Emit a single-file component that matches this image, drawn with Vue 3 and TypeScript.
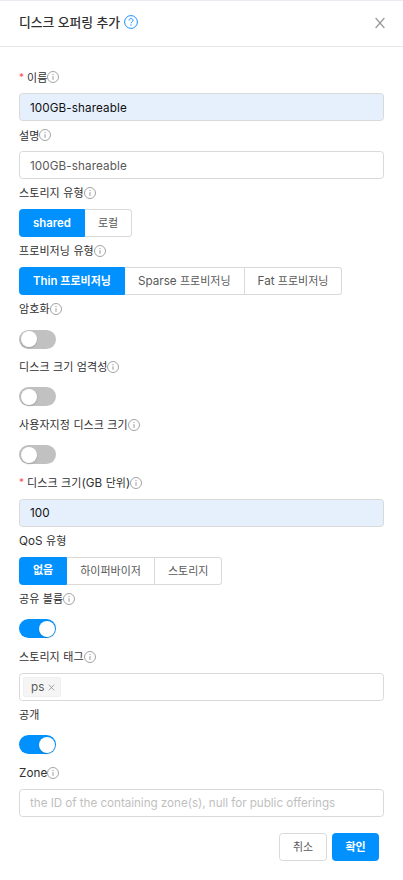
<script setup lang="ts">
import { defineComponent, h, ref } from 'vue'

type Kind = 'input' | 'radio' | 'switch' | 'tags'

interface Field {
  key: string
  label: string
  kind: Kind
  required?: boolean
  info?: boolean
  filled?: boolean
  value?: string
  placeholder?: string
  options?: string[]
  on?: boolean
}

// Hangul runs are set slightly smaller than the Latin ones beside them.
const MixedText = defineComponent({
  props: { text: { type: String, required: true } },
  setup(props) {
    return () =>
      (props.text.match(/[\uac00-\ud7a3]+|[^\uac00-\ud7a3]+/g) ?? []).map((run) =>
        h('span', { class: /[\uac00-\ud7a3]/.test(run) ? 'run-ko' : 'run-latin' }, run),
      )
  },
})

const fields = ref<Field[]>([
  { key: 'name', label: '이름', kind: 'input', required: true, info: true, filled: true, value: '100GB-shareable' },
  { key: 'description', label: '설명', kind: 'input', info: true, value: '100GB-shareable' },
  { key: 'storagetype', label: '스토리지 유형', kind: 'radio', info: true, value: 'shared', options: ['shared', '로컬'] },
  {
    key: 'provisioningtype',
    label: '프로비저닝 유형',
    kind: 'radio',
    info: true,
    value: 'Thin 프로비저닝',
    options: ['Thin 프로비저닝', 'Sparse 프로비저닝', 'Fat 프로비저닝'],
  },
  { key: 'encrypt', label: '암호화', kind: 'switch', info: true, on: false },
  { key: 'strict', label: '디스크 크기 엄격성', kind: 'switch', info: true, on: false },
  { key: 'custom', label: '사용자지정 디스크 크기', kind: 'switch', info: true, on: false },
  { key: 'size', label: '디스크 크기(GB 단위)', kind: 'input', required: true, info: true, filled: true, value: '100' },
  { key: 'qos', label: 'QoS 유형', kind: 'radio', value: '없음', options: ['없음', '하이퍼바이저', '스토리지'] },
  { key: 'shareable', label: '공유 볼륨', kind: 'switch', info: true, on: true },
  { key: 'tags', label: '스토리지 태그', kind: 'tags', info: true, value: 'ps' },
  { key: 'public', label: '공개', kind: 'switch', on: true },
  {
    key: 'zone',
    label: 'Zone',
    kind: 'input',
    info: true,
    value: '',
    placeholder: 'the ID of the containing zone(s), null for public offerings',
  },
])
</script>

<template>
  <div class="modal">
    <header class="header">
      <h1 class="title">디스크 오퍼링 추가</h1>
      <svg class="help" viewBox="0 0 14 14" fill="none" stroke="currentColor">
        <circle cx="7" cy="7" r="6.4" stroke-width="1" />
        <path d="M5 5.5C5 4.3 5.9 3.6 7 3.6s2 .7 2 1.8c0 1.4-2 1.5-2 2.9" stroke-width="1" />
        <circle cx="7" cy="10" r=".65" fill="currentColor" stroke="none" />
      </svg>
      <svg class="close" viewBox="0 0 12 12" fill="none" stroke="currentColor">
        <path d="M1.6 1 10.4 11M10.4 1 1.6 11" stroke-width="1.2" />
      </svg>
    </header>

    <form class="form" @submit.prevent>
      <div v-for="field in fields" :key="field.key" class="field">
        <div class="label">
          <span v-if="field.required" class="required">*</span>
          <span class="label-text"><MixedText :text="field.label" /></span>
          <svg v-if="field.info" class="info" viewBox="0 0 12 12" fill="none" stroke="currentColor">
            <circle cx="6" cy="6" r="5.5" stroke-width=".8" />
            <path d="M6 5.2v3.6" stroke-width=".9" />
            <circle cx="6" cy="3.6" r=".6" fill="currentColor" stroke="none" />
          </svg>
        </div>

        <div class="control">
          <input
            v-if="field.kind === 'input'"
            v-model="field.value"
            class="input"
            :class="{ filled: field.filled }"
            :placeholder="field.placeholder"
            type="text"
            spellcheck="false"
          />

          <div v-else-if="field.kind === 'radio'" class="radio-group">
            <button
              v-for="option in field.options"
              :key="option"
              type="button"
              class="radio"
              :class="{ selected: option === field.value }"
              @click="field.value = option"
            >
              <MixedText :text="option" />
            </button>
          </div>

          <button
            v-else-if="field.kind === 'switch'"
            type="button"
            class="switch"
            :class="{ on: field.on }"
            @click="field.on = !field.on"
          >
            <span class="knob"></span>
          </button>

          <div v-else class="tags">
            <span class="tag">
              {{ field.value }}
              <svg class="tag-close" viewBox="0 0 8 8" fill="none" stroke="currentColor">
                <path d="M1 .8 7 7.2M7 .8 1 7.2" stroke-width=".9" />
              </svg>
            </span>
          </div>
        </div>
      </div>

      <footer class="footer">
        <button type="button" class="button">취소</button>
        <button type="submit" class="button primary">확인</button>
      </footer>
    </form>
  </div>
</template>

<style>
body {
  background: #fff;
}

.run-ko {
  font-size: 11px;
}

.run-latin {
  white-space: pre;
}
</style>

<style scoped>
.modal {
  box-sizing: border-box;
  width: 100%;
  height: 880px;
  overflow: hidden;
  border-top: 1px solid #e9edf1;
  background: #fff;
  color: #303030;
  font: 11.7px/1.4 Inter, 'Noto Sans CJK KR', sans-serif;
}

button,
input {
  box-sizing: border-box;
  margin: 0;
  font: inherit;
}

.header {
  display: flex;
  align-items: center;
  box-sizing: border-box;
  height: 46px;
  padding: 0 17px 2px 19px;
  border-bottom: 1px solid #e8e8e8;
}

.title {
  margin: 0;
  font-size: 12.8px;
  font-weight: 500;
}

.help {
  width: 14px;
  height: 14px;
  margin-bottom: 2px;
  margin-left: 4px;
  color: #1890ff;
}

.close {
  width: 12px;
  height: 12px;
  margin-left: auto;
  color: #999;
}

.form {
  padding: 16.3px 19px 0;
}

.field {
  height: 57.95px;
}

.label {
  display: flex;
  align-items: center;
  box-sizing: border-box;
  height: 30px;
  padding-bottom: 1px;
  white-space: nowrap;
}

.label-text {
  letter-spacing: 0.08px;
}

.required {
  width: 8px;
  padding-bottom: 2px;
  color: #ff4d4f;
  font-size: 10px;
}

.info {
  width: 12px;
  height: 12px;
  margin-bottom: 1px;
  color: #8c8c8c;
}

.control {
  display: flex;
  align-items: center;
  height: 27.95px;
}

.input {
  width: 365px;
  height: 28px;
  padding: 1px 10px 0;
  border: 1px solid #d9d9d9;
  border-radius: 3.5px;
  outline: none;
  background: #fff;
  color: #595959;
  letter-spacing: 0.1px;
}

.input.filled {
  background: #e6f0fd;
  color: #111;
}

.input::placeholder {
  color: #bfbfbf;
  letter-spacing: -0.05px;
  opacity: 1;
}

.radio-group {
  display: flex;
}

.radio {
  height: 28px;
  padding: 1px 13px 0;
  border: 1px solid #d9d9d9;
  border-left-width: 0;
  background: #fff;
  color: #595959;
  white-space: nowrap;
}

.radio:first-child {
  border-left-width: 1px;
  border-radius: 3.5px 0 0 3.5px;
}

.radio:last-child {
  border-radius: 0 3.5px 3.5px 0;
}

.radio.selected {
  border-color: #0091ff;
  background: #0091ff;
  color: #fff;
  font-size: 11.4px;
  font-weight: 600;
}

.switch {
  display: flex;
  align-items: center;
  width: 37px;
  height: 19px;
  padding: 0 1.5px;
  border: 0;
  border-radius: 10px;
  background: #c1c1c1;
}

.switch.on {
  justify-content: flex-end;
  background: #0091ff;
}

.knob {
  width: 16px;
  height: 16px;
  border-radius: 50%;
  background: #fff;
  box-shadow: 0 1px 2px rgba(0, 35, 11, 0.2);
}

.tags {
  display: flex;
  align-items: center;
  box-sizing: border-box;
  width: 365px;
  height: 28px;
  padding: 0 3px;
  border: 1px solid #d9d9d9;
  border-radius: 3.5px;
}

.tag {
  display: flex;
  align-items: center;
  gap: 4px;
  box-sizing: border-box;
  height: 20px;
  padding: 1px 5px 0 7px;
  border: 1px solid #f0f0f0;
  border-radius: 2px;
  background: #f5f5f5;
  color: #595959;
}

.tag-close {
  width: 7px;
  height: 7px;
  color: #8c8c8c;
}

.footer {
  display: flex;
  justify-content: flex-end;
  gap: 5px;
  padding: 16.5px 5px 0 0;
}

.button {
  width: 48px;
  height: 28px;
  padding: 1px 0 0;
  border: 1px solid #d9d9d9;
  border-radius: 3.5px;
  background: #fff;
  color: #595959;
  font-size: 11px;
}

.button.primary {
  width: 47px;
  border-color: #0091ff;
  background: #0091ff;
  color: #fff;
  font-weight: 600;
}
</style>
